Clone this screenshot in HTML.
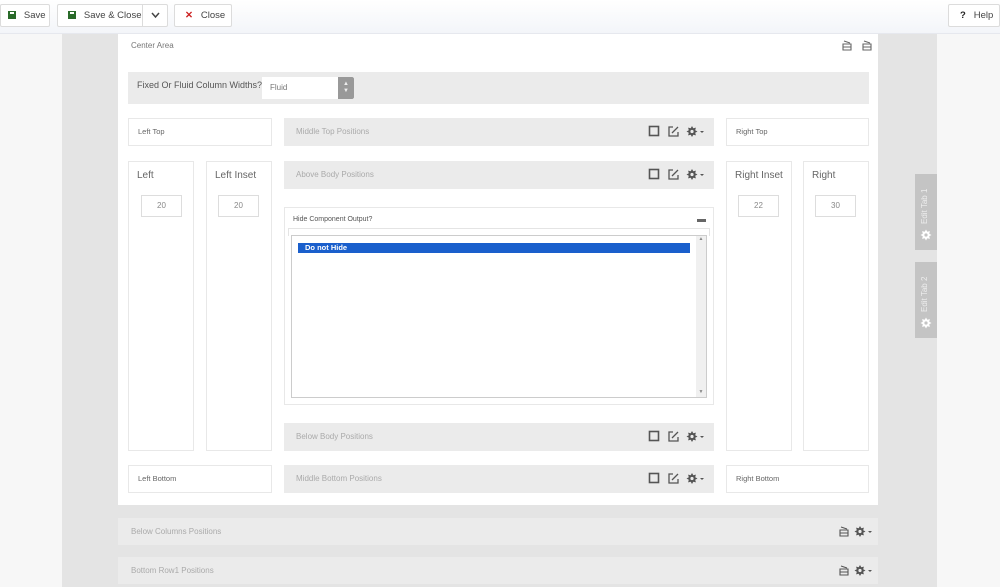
<!DOCTYPE html>
<html><head><meta charset="utf-8"><style>
*{box-sizing:border-box;margin:0;padding:0}
body{width:1000px;height:587px;overflow:hidden;background:#f7f7f7;font-family:"Liberation Sans",sans-serif;position:relative;color:#555}
.a{position:absolute}
.top{left:0;top:0;width:1000px;height:34px;background:linear-gradient(#fff,#f3f5f9);border-bottom:1px solid #e6e8ee}
.btn{position:absolute;top:4px;height:23px;border:1px solid #dcdcdc;background:#fff;border-radius:2px;font-size:9.5px;color:#444;line-height:21px;white-space:nowrap}
.gray{left:62px;top:34px;width:875px;height:553px;background:#e4e4e4}
.white{left:118px;top:34px;width:760px;height:471px;background:#fff}
.box{position:absolute;background:#fff;border:1px solid #e8e8e8}
.bar{position:absolute;background:#ebebeb;font-size:8px;color:#aaa;line-height:27px;padding-left:12px}
.sm{font-size:7.5px;color:#666;line-height:26px;padding-left:9px}
.col{font-size:10px;color:#666;padding:8px 0 0 8px}
.inp{position:absolute;width:41px;height:22px;border:1px solid #ddd;background:#fff;font-size:8px;color:#888;text-align:center;line-height:20px}
.ic{position:absolute;right:8px;top:7px;height:13px}
.tab{position:absolute;left:915px;width:22px;height:76px;background:#c4c4c4}
.tab span{position:absolute;left:5px;top:10px;writing-mode:vertical-rl;transform:rotate(180deg);font-size:8px;color:#eee;height:40px}
.fl{display:inline-block;width:8px;height:8px;background:#2a6b2a;vertical-align:-1px;position:relative}
.fl:after{content:"";position:absolute;left:2px;top:1px;width:4px;height:2px;background:#fff}
</style></head><body>
<div class="a top"></div>
<div class="btn" style="left:0;width:50px;padding-left:7px"><span class="fl"></span>&nbsp;&nbsp; Save</div>
<div class="btn" style="left:57px;width:111px;padding-left:10px"><span class="fl"></span>&nbsp;&nbsp; Save &amp; Close<span style="position:absolute;left:84px;top:0;width:1px;height:21px;background:#dcdcdc"></span><svg style="position:absolute;left:93px;top:7px" width="9" height="7"><path d="M1 1L4.5 5L8 1" stroke="#444" stroke-width="1.5" fill="none"/></svg></div>
<div class="btn" style="left:174px;width:58px;padding-left:10px"><span style="color:#c22;font-weight:bold">✕</span>&nbsp;&nbsp; Close</div>
<div class="btn" style="left:948px;width:52px;padding-left:11px"><b style="color:#222">?</b>&nbsp;&nbsp; Help</div>
<div class="a gray"></div>
<div class="a white"></div>
<div class="a" style="left:131px;top:41px;font-size:8px;color:#777">Center Area</div>
<svg class="a" style="left:841px;top:40px" width="34" height="12"><g stroke="#666" fill="none" stroke-width="1.1"><path d="M2 4h8v6H2zM2 7h8M3 1l6 2"/><path d="M22 4h8v6h-8zM22 7h8M23 1l6 2"/></g></svg>
<div class="a" style="left:128px;top:72px;width:741px;height:32px;background:#ebebeb"></div>
<div class="a" style="left:137px;top:80px;font-size:9px;color:#555;white-space:nowrap">Fixed Or Fluid Column Widths?</div>
<div class="a" style="left:262px;top:77px;width:92px;height:22px;background:#fff;font-size:8px;color:#777;line-height:22px;padding-left:8px">Fluid</div>
<div class="a" style="left:338px;top:77px;width:16px;height:22px;background:#999;border-radius:0 2px 2px 0;color:#eee;font-size:6px;text-align:center;line-height:7px;padding-top:4px">▲<br>▼</div>

<div class="box sm" style="left:128px;top:118px;width:144px;height:28px">Left Top</div>
<div class="box sm" style="left:726px;top:118px;width:143px;height:28px">Right Top</div>
<div class="box sm" style="left:128px;top:465px;width:144px;height:28px">Left Bottom</div>
<div class="box sm" style="left:726px;top:465px;width:143px;height:28px">Right Bottom</div>

<div class="box col" style="left:128px;top:161px;width:66px;height:290px">Left</div>
<div class="box col" style="left:206px;top:161px;width:66px;height:290px">Left Inset</div>
<div class="box col" style="left:726px;top:161px;width:66px;height:290px">Right Inset</div>
<div class="box col" style="left:803px;top:161px;width:66px;height:290px">Right</div>
<div class="inp" style="left:141px;top:195px">20</div>
<div class="inp" style="left:218px;top:195px">20</div>
<div class="inp" style="left:738px;top:195px">22</div>
<div class="inp" style="left:815px;top:195px">30</div>

<svg width="0" height="0" style="position:absolute"><defs>
<g id="gear"><path d="M0 -5.5L1.3 -3.2 3.9 -3.9 3.2 -1.3 5.5 0 3.2 1.3 3.9 3.9 1.3 3.2 0 5.5 -1.3 3.2 -3.9 3.9 -3.2 1.3 -5.5 0 -3.2 -1.3 -3.9 -3.9 -1.3 -3.2Z" fill="#555"/><circle r="1.6" fill="#ebebeb"/></g>
<g id="ico"><rect x="1.5" y="1.5" width="9" height="9" fill="none" stroke="#555" stroke-width="1.6"/><path d="M25 2h-4v9h9V7M24 8l6-6" fill="none" stroke="#555" stroke-width="1.3"/><use href="#gear" x="44" y="6.5"/><path d="M52 6h4l-2 2z" fill="#555"/></g>
<g id="ic2"><path d="M2 5h8v6H2zM2 8h8M3 2l6 2" fill="none" stroke="#555" stroke-width="1.1"/><use href="#gear" x="22" y="6.5"/><path d="M30 6h4l-2 2z" fill="#555"/></g></defs></svg>

<div class="bar" style="left:284px;top:118px;width:430px;height:28px">Middle Top Positions<svg class="ic" width="58" height="13"><use href="#ico"/></svg></div>
<div class="bar" style="left:284px;top:161px;width:430px;height:28px">Above Body Positions<svg class="ic" width="58" height="13"><use href="#ico"/></svg></div>
<div class="bar" style="left:284px;top:423px;width:430px;height:28px">Below Body Positions<svg class="ic" width="58" height="13"><use href="#ico"/></svg></div>
<div class="bar" style="left:284px;top:465px;width:430px;height:28px">Middle Bottom Positions<svg class="ic" width="58" height="13"><use href="#ico"/></svg></div>

<div class="box" style="left:284px;top:207px;width:430px;height:198px"></div>
<div class="a" style="left:293px;top:216px;font-size:7px;color:#555">Hide Component Output?</div>
<div class="a" style="left:697px;top:219px;width:9px;height:3px;background:#666"></div>
<div class="a" style="left:288px;top:228px;width:422px;height:8px;border:1px solid #e4e4e4;border-bottom:none"></div>
<div class="a" style="left:291px;top:235px;width:416px;height:163px;border:1px solid #ccc;background:#fff"></div>
<div class="a" style="left:696px;top:236px;width:10px;height:161px;background:#f0f0f0;font-size:5px;color:#888;text-align:center">▲<div style="position:absolute;bottom:2px;width:10px">▼</div></div>
<div class="a" style="left:298px;top:243px;width:392px;height:10px;background:#1a5fcc;color:#fff;font-size:7.5px;font-weight:bold;line-height:10px;padding-left:7px">Do not Hide</div>

<div class="bar" style="left:118px;top:518px;width:760px;height:27px;padding-left:13px">Below Columns Positions<svg class="ic" style="right:4px" width="36" height="13"><use href="#ic2"/></svg></div>
<div class="bar" style="left:118px;top:557px;width:760px;height:27px;padding-left:13px">Bottom Row1 Positions<svg class="ic" style="right:4px" width="36" height="13"><use href="#ic2"/></svg></div>

<div class="tab" style="top:174px"><span>Edit Tab 1</span><svg class="a" style="left:5px;top:55px" width="12" height="12"><g transform="translate(6 6)"><path d="M0 -5.5L1.3 -3.2 3.9 -3.9 3.2 -1.3 5.5 0 3.2 1.3 3.9 3.9 1.3 3.2 0 5.5 -1.3 3.2 -3.9 3.9 -3.2 1.3 -5.5 0 -3.2 -1.3 -3.9 -3.9 -1.3 -3.2Z" fill="#fff"/><circle r="1.6" fill="#c4c4c4"/></g></svg></div>
<div class="tab" style="top:262px"><span>Edit Tab 2</span><svg class="a" style="left:5px;top:55px" width="12" height="12"><g transform="translate(6 6)"><path d="M0 -5.5L1.3 -3.2 3.9 -3.9 3.2 -1.3 5.5 0 3.2 1.3 3.9 3.9 1.3 3.2 0 5.5 -1.3 3.2 -3.9 3.9 -3.2 1.3 -5.5 0 -3.2 -1.3 -3.9 -3.9 -1.3 -3.2Z" fill="#fff"/><circle r="1.6" fill="#c4c4c4"/></g></svg></div>
</body></html>
